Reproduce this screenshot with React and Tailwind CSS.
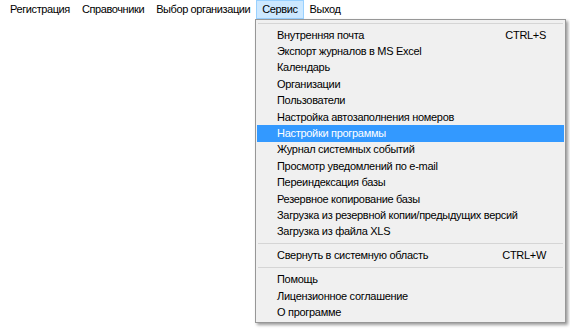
import React from 'react';

const topMenu = ['Регистрация', 'Справочники', 'Выбор организации', 'Сервис', 'Выход'];

const groups = [
  [
    { label: 'Внутренняя почта', shortcut: 'CTRL+S' },
    { label: 'Экспорт журналов в MS Excel' },
    { label: 'Календарь' },
    { label: 'Организации' },
    { label: 'Пользователи' },
    { label: 'Настройка автозаполнения номеров' },
    { label: 'Настройки программы', active: true },
    { label: 'Журнал системных событий' },
    { label: 'Просмотр уведомлений по e-mail' },
    { label: 'Переиндексация базы' },
    { label: 'Резервное копирование базы' },
    { label: 'Загрузка из резервной копии/предыдущих версий' },
    { label: 'Загрузка из файла XLS' },
  ],
  [{ label: 'Свернуть в системную область', shortcut: 'CTRL+W' }],
  [
    { label: 'Помощь' },
    { label: 'Лицензионное соглашение' },
    { label: 'О программе' },
  ],
];

function Separator() {
  return (
    <div className="h-[7.6px] flex items-center px-[2px]">
      <div className="w-full h-px bg-[#d5d5d5]" />
    </div>
  );
}

function MenuItem({ item }) {
  return (
    <div
      className={`h-[16.4px] flex items-center justify-between whitespace-nowrap pl-[20px] pr-[18px] mx-[1px] ${
        item.active ? 'bg-[#3399ff] text-white' : 'text-black'
      }`}
    >
      <span>{item.label}</span>
      {item.shortcut && <span>{item.shortcut}</span>}
    </div>
  );
}

export default function App() {
  return (
    <div
      className="relative w-[570px] h-[329px] bg-white text-[11px] tracking-[-0.3px] leading-none overflow-hidden"
      style={{ fontFamily: '"Liberation Sans", Arial, sans-serif' }}
    >
      {/* Menu bar */}
      <div className="flex h-[19px] pl-[4px] whitespace-nowrap tracking-[-0.4px]">
        {topMenu.map((name) => (
          <div
            key={name}
            className={`flex items-center px-[5px] border ${
              name === 'Сервис' ? 'bg-[#cce8ff] border-[#99d1ff]' : 'border-transparent'
            }`}
          >
            {name}
          </div>
        ))}
      </div>

      {/* Dropdown */}
      <div className="absolute left-[255px] top-[19px] w-[311px] bg-[#f0f0f0] border border-[#979797] shadow-[2px_2px_3px_rgba(0,0,0,0.4)] pb-[1px]">
        <div className="h-[7px] flex items-center px-[2px]">
          <div className="w-full h-px bg-[#d5d5d5]" />
        </div>
        {groups.map((group, gi) => (
          <React.Fragment key={gi}>
            {gi > 0 && <Separator />}
            {group.map((item) => (
              <MenuItem key={item.label} item={item} />
            ))}
          </React.Fragment>
        ))}
      </div>
    </div>
  );
}
